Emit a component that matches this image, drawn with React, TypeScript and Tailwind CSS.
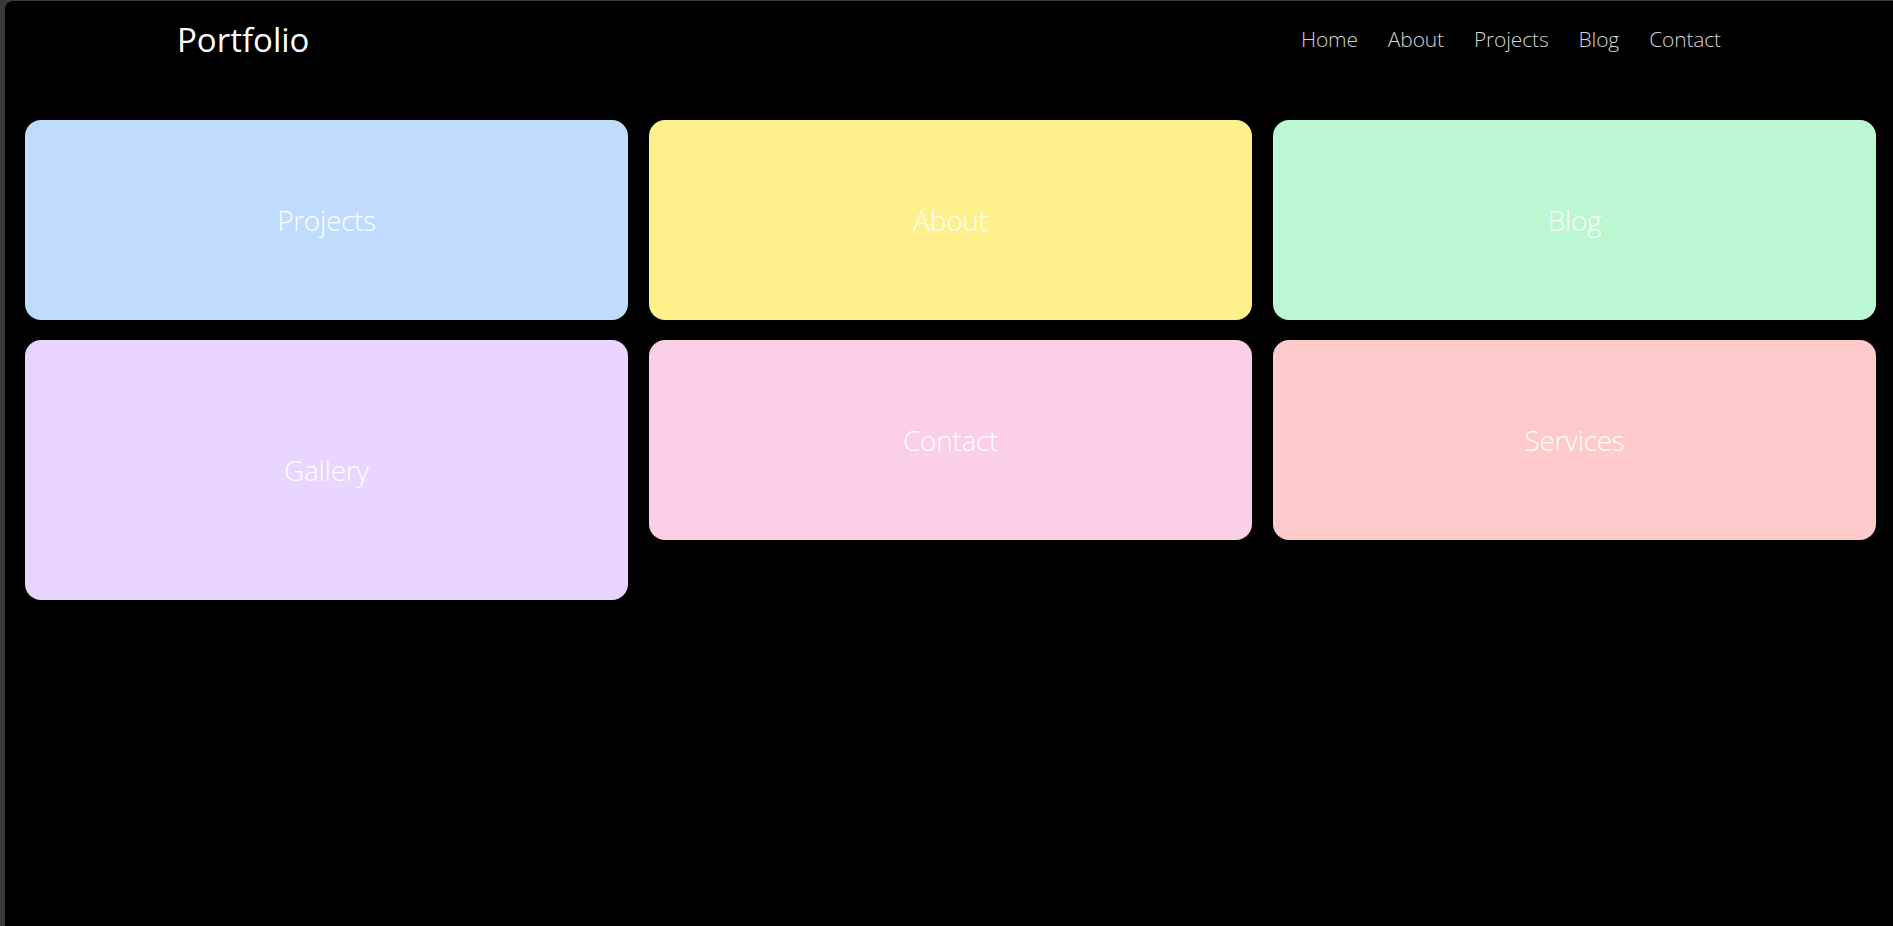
import React from "react";

const cards = [
  { label: "Projects", bg: "bg-[#bfdbfe]", h: "h-[200px]" },
  { label: "About", bg: "bg-[#fef08a]", h: "h-[200px]" },
  { label: "Blog", bg: "bg-[#bbf7d0]", h: "h-[200px]" },
  { label: "Gallery", bg: "bg-[#e9d5ff]", h: "h-[260px]" },
  { label: "Contact", bg: "bg-[#fbcfe8]", h: "h-[200px]" },
  { label: "Services", bg: "bg-[#fecaca]", h: "h-[200px]" },
];

const nav = ["Home", "About", "Projects", "Blog", "Contact"];

export default function App() {
  return (
    <div className="w-full h-[926px] overflow-hidden bg-[#3a3a3a] pl-[5px] pt-[1px] font-['Open_Sans','Noto_Sans',sans-serif]">
      <div className="h-full bg-black rounded-tl-lg">
        <header className="mx-auto w-[1544px] h-[77px] flex items-center justify-between">
          <div className="text-white text-[33px] leading-none font-medium">Portfolio</div>
          <nav className="flex items-center gap-[30px] text-[21px] leading-none font-light tracking-[-0.15px] text-[#d4d4d4]">
            {nav.map((n) => (
              <a key={n} href="#" className="block">
                {n}
              </a>
            ))}
          </nav>
        </header>
        <main className="pt-[42px] pl-[20px] pr-[17px]">
          <div className="grid grid-cols-3 gap-x-[21px] gap-y-[20px] items-start">
            {cards.map((c) => (
              <div
                key={c.label}
                className={`${c.bg} ${c.h} rounded-2xl flex items-center justify-center`}
              >
                <span className="text-white text-[28px] leading-none font-light tracking-[-0.3px]">
                  {c.label}
                </span>
              </div>
            ))}
          </div>
        </main>
      </div>
    </div>
  );
}
